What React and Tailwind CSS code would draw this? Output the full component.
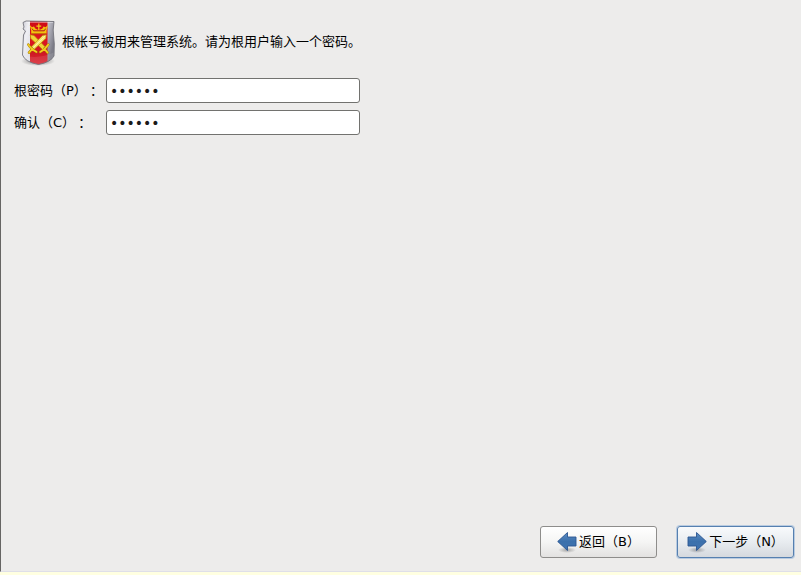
import { useState } from "react";

function ShieldIcon() {
  return (
    <svg width="36" height="48" viewBox="0 0 36 48" className="shrink-0" aria-hidden="true">
      <defs>
        <linearGradient id="steel" x1="0" y1="0" x2="1" y2="0.3">
          <stop offset="0" stopColor="#b9b9c4" />
          <stop offset="0.25" stopColor="#efeff3" />
          <stop offset="0.7" stopColor="#cfcfd8" />
          <stop offset="1" stopColor="#7d7d88" />
        </linearGradient>
        <linearGradient id="red" x1="0" y1="0" x2="0" y2="1">
          <stop offset="0" stopColor="#cc0a14" />
          <stop offset="0.4" stopColor="#e01420" />
          <stop offset="0.72" stopColor="#cf1622" />
          <stop offset="1" stopColor="#d92a35" />
        </linearGradient>
        <radialGradient id="shade">
          <stop offset="0" stopColor="#000" stopOpacity="0.5" />
          <stop offset="1" stopColor="#000" stopOpacity="0" />
        </radialGradient>
        <clipPath id="shieldClip">
          <path d="M3 4.5 L6 3 L34 3.5 L33.2 12 L34.3 26 L34 38 Q31 44 18.5 46.5 Q5 44 2.5 37 L3.5 17 L5.5 13 L3 11 L4 9 Z" />
        </clipPath>
      </defs>
      <ellipse cx="18" cy="43" rx="17" ry="5" fill="url(#shade)" />
      <g clipPath="url(#shieldClip)">
        <rect width="36" height="48" fill="url(#steel)" />
        <rect x="10" y="2" width="17.5" height="45" fill="url(#red)" />
        <path d="M2 37 Q18 42 35 34 V48 H2Z" fill="#fff" opacity="0.1" />
      </g>
      <path
        d="M3 4.5 L6 3 L34 3.5 L33.2 12 L34.3 26 L34 38 Q31 44 18.5 46.5 Q5 44 2.5 37 L3.5 17 L5.5 13 L3 11 L4 9 Z"
        fill="none"
        stroke="#74747c"
        strokeWidth="0.9"
        strokeLinejoin="round"
      />
      <path d="M6 4.3 L33 4.6" stroke="#fff" strokeWidth="0.7" opacity="0.6" />
      <path
        d="M9.7 7 L12 9.2 L14 8.6 L15.2 10.6 L17.6 11.8 H20 L22.4 10.6 L23.6 8.6 L25.6 9.2 L28 7 L26.6 12.4 V15.6 H11.2 V12.4 Z"
        fill="#f2c20d"
      />
      <path d="M12 10.6 L13.6 12.8 H24.2 L25.6 10.6" fill="none" stroke="#b5161a" strokeWidth="1" />
      <path d="M12 15.8 H26" stroke="#a87400" strokeWidth="0.6" />
      <path d="M18.8 5.5 V12 M16.4 8.2 H21.2" stroke="#f6cd17" strokeWidth="1.2" />
      <g strokeLinejoin="round" stroke="#b98c05" strokeWidth="0.7">
        <path d="M10.3 16.8 L14 17.4 L25.3 29 L22.6 31.6 L10.8 20.5Z" fill="#f0d438" />
        <path d="M26.3 16.8 L22.6 17.4 L11.3 29 L14 31.6 L25.8 20.5Z" fill="#f8e468" />
      </g>
      <path d="M25 18.2 L13 30" stroke="#fdf6bd" strokeWidth="0.9" />
      <path
        d="M8.3 26.5 Q10.5 30.5 16.5 34 M12.4 30.8 L9 34.6 M28.3 26.5 Q26 30.5 20.2 34 M24.2 30.8 L27.6 34.6"
        fill="none"
        stroke="#a17700"
        strokeWidth="2.5"
        strokeLinecap="round"
      />
      <path
        d="M8.3 26.5 Q10.5 30.5 16.5 34 M12.4 30.8 L9 34.6 M28.3 26.5 Q26 30.5 20.2 34 M24.2 30.8 L27.6 34.6"
        fill="none"
        stroke="#f2cb1d"
        strokeWidth="1.6"
        strokeLinecap="round"
      />
    </svg>
  );
}

function ArrowIcon({ direction }) {
  return (
    <svg width="20" height="22" viewBox="0 0 20 22" className="shrink-0" aria-hidden="true">
      <defs>
        <linearGradient id={`arrow-${direction}`} x1="0" y1="0" x2="0" y2="1">
          <stop offset="0" stopColor="#5a8cc2" />
          <stop offset="0.5" stopColor="#3b70ac" />
          <stop offset="1" stopColor="#3e73b0" />
        </linearGradient>
        <radialGradient id={`arrow-shade-${direction}`}>
          <stop offset="0" stopColor="#000" stopOpacity="0.3" />
          <stop offset="1" stopColor="#000" stopOpacity="0" />
        </radialGradient>
      </defs>
      <ellipse cx="10" cy="19" rx="9" ry="3" fill={`url(#arrow-shade-${direction})`} />
      <path
        d={
          direction === "left"
            ? "M0.7 10.5 L10.5 1.5 V6 H19 V15 H10.5 V19.5 Z"
            : "M19.3 10.5 L9.5 1.5 V6 H1 V15 H9.5 V19.5 Z"
        }
        fill={`url(#arrow-${direction})`}
        stroke="#2a5591"
        strokeWidth="0.9"
        strokeLinejoin="round"
      />
    </svg>
  );
}

function PasswordField({ id, label, value, onChange }) {
  return (
    <div className="flex items-center">
      <label htmlFor={id} className="flex w-[92px] shrink-0 whitespace-nowrap">
        <span>{label}</span>
        <span className="font-['Noto_Sans_CJK_TC',sans-serif]">：</span>
      </label>
      <input
        id={id}
        type="password"
        value={value}
        onChange={(e) => onChange(e.target.value)}
        className="h-[25px] w-full max-w-[254px] min-w-0 rounded-[3px] border border-[#72726f] bg-white px-[3px] text-sm text-[#1a1a1a] outline-none"
      />
    </div>
  );
}

export default function App() {
  const [password, setPassword] = useState("secret");
  const [confirm, setConfirm] = useState("secret");

  return (
    <div className="flex min-h-screen flex-col bg-[#ffffe1] pb-[3px] font-['DejaVu_Sans','Noto_Sans_CJK_SC',sans-serif] text-[13px] leading-5 text-black [text-spacing-trim:space-all]">
      <div className="flex grow flex-col border-b border-l border-b-[#dfdfe8] border-l-[#666563] bg-[#edeceb]">
        <div className="flex items-center gap-1.5 pt-[18px] pl-[19px]">
          <ShieldIcon />
          <p>根帐号被用来管理系统。请为根用户输入一个密码。</p>
        </div>

        <form className="mt-3 flex flex-col gap-[7px] px-[13px]">
          <PasswordField id="password" label="根密码（P）" value={password} onChange={setPassword} />
          <PasswordField id="confirm" label="确认（C）" value={confirm} onChange={setConfirm} />
        </form>

        <div className="mt-auto flex justify-end gap-5 pr-[7px] pb-[13px]">
          <button
            type="button"
            className="flex h-8 w-[117px] items-center justify-center gap-0.5 rounded-[3px] border border-[#8e8d8b] bg-linear-to-b from-white via-[#f5f5f4] to-[#e3e2e1] whitespace-nowrap"
          >
            <ArrowIcon direction="left" />
            <span>返回（B）</span>
          </button>
          <button
            type="button"
            className="flex h-8 w-[117px] items-center justify-center gap-0.5 rounded-[3px] border border-[#5680b0] bg-linear-to-b from-[#f8fafc] via-[#e8ecf0] to-[#d5d9de] whitespace-nowrap shadow-[0_0_0_1px_#b9cbe0]"
          >
            <ArrowIcon direction="right" />
            <span>下一步（N）</span>
          </button>
        </div>
      </div>
    </div>
  );
}
